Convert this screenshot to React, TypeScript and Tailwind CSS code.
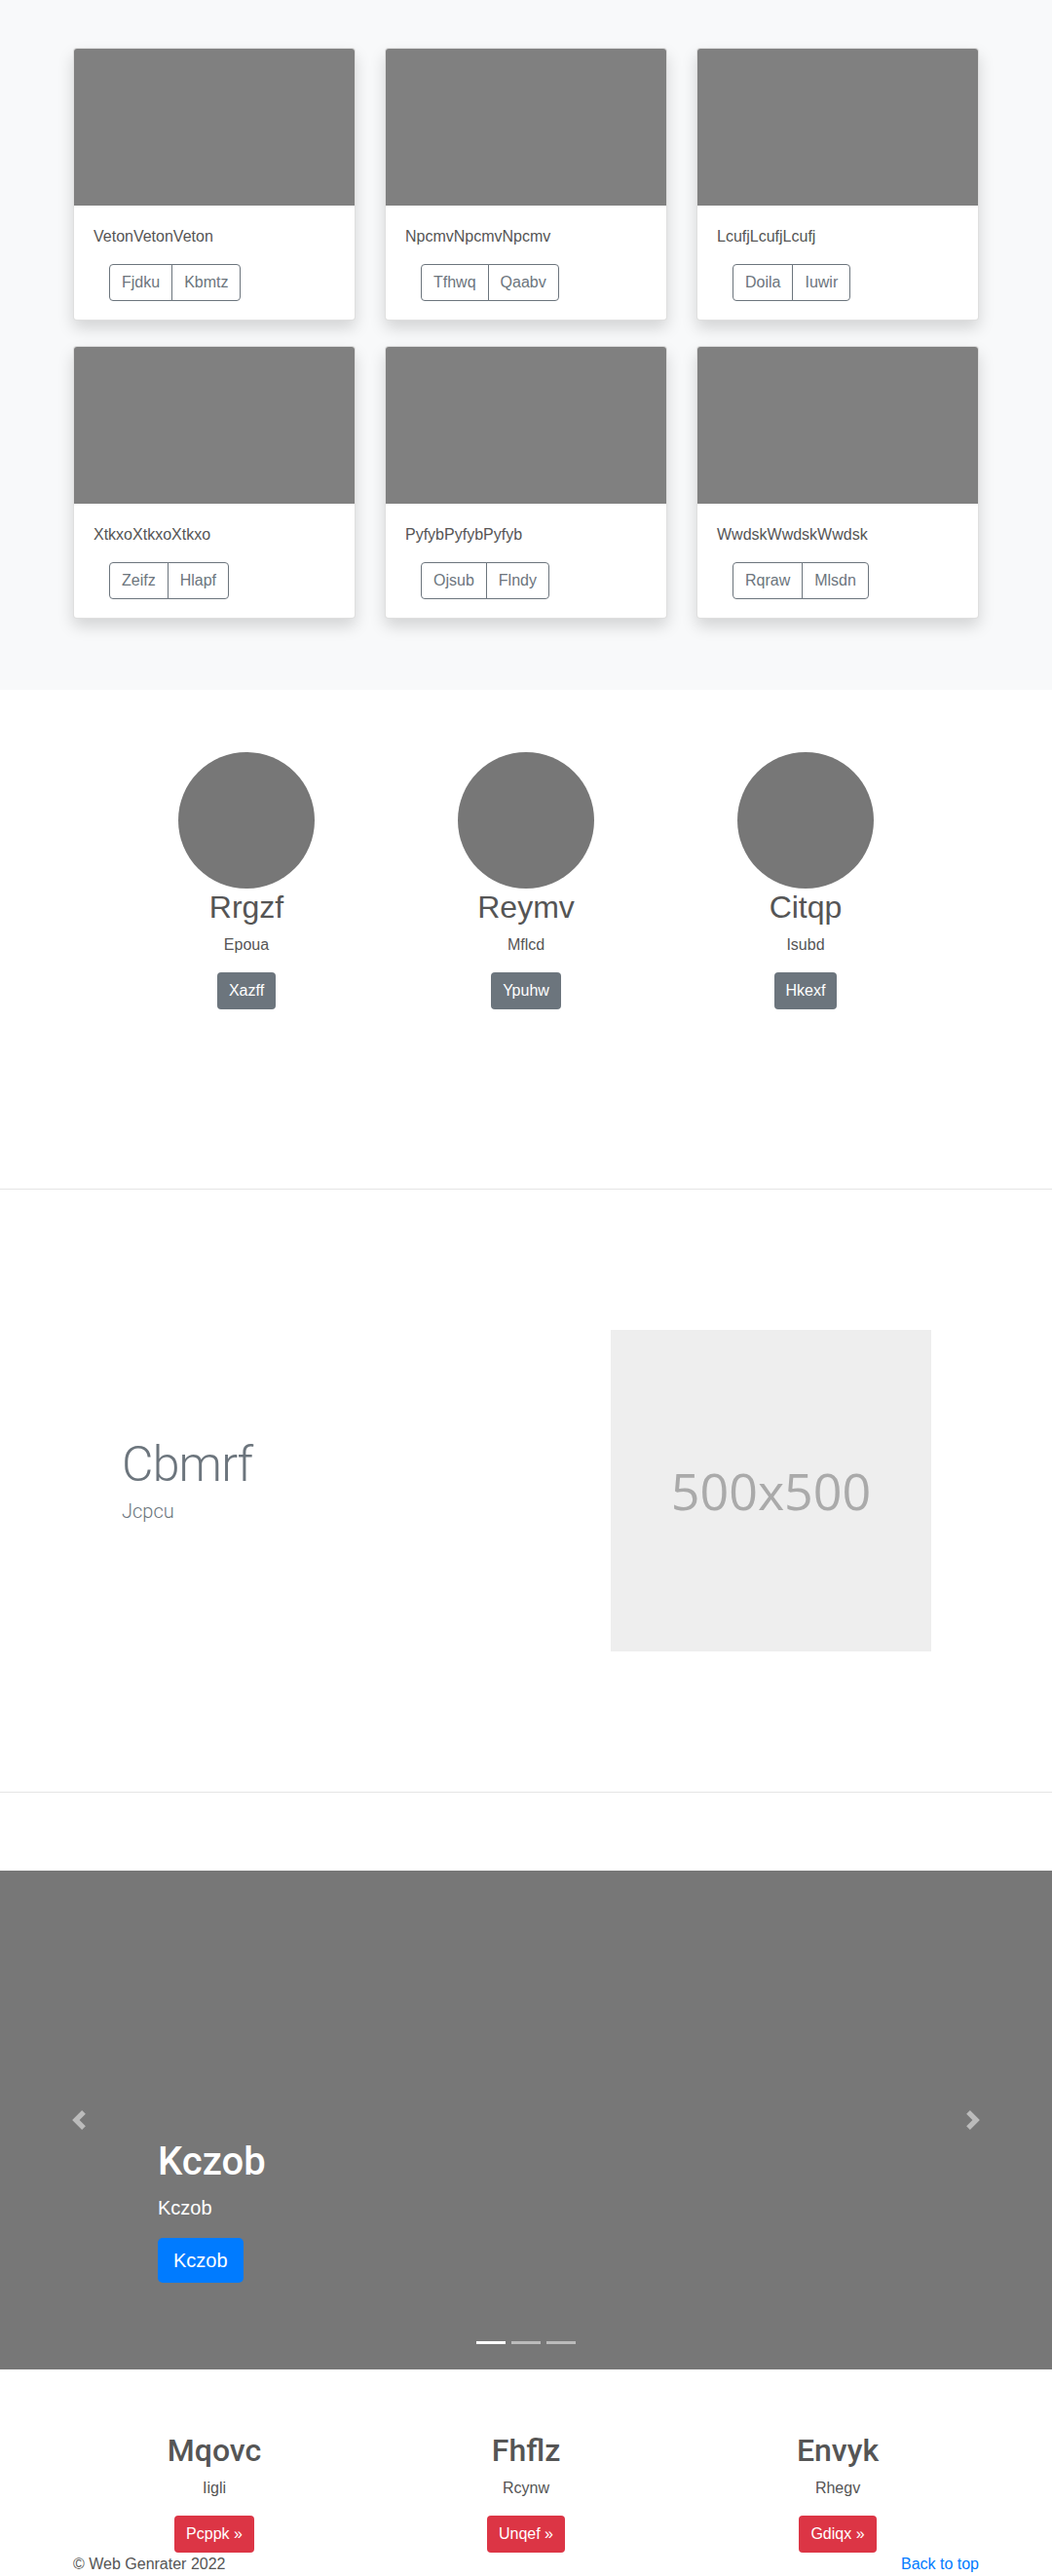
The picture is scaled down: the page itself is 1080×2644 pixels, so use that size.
const cards = [
  { title: "VetonVetonVeton", a: "Fjdku", b: "Kbmtz" },
  { title: "NpcmvNpcmvNpcmv", a: "Tfhwq", b: "Qaabv" },
  { title: "LcufjLcufjLcufj", a: "Doila", b: "Iuwir" },
  { title: "XtkxoXtkxoXtkxo", a: "Zeifz", b: "Hlapf" },
  { title: "PyfybPyfybPyfyb", a: "Ojsub", b: "Flndy" },
  { title: "WwdskWwdskWwdsk", a: "Rqraw", b: "Mlsdn" },
];

const people = [
  { name: "Rrgzf", sub: "Epoua", btn: "Xazff" },
  { name: "Reymv", sub: "Mflcd", btn: "Ypuhw" },
  { name: "Citqp", sub: "Isubd", btn: "Hkexf" },
];

const features = [
  { name: "Mqovc", sub: "Iigli", btn: "Pcppk »" },
  { name: "Fhflz", sub: "Rcynw", btn: "Unqef »" },
  { name: "Envyk", sub: "Rhegv", btn: "Gdiqx »" },
];

function Chevron({ dir }: { dir: "prev" | "next" }) {
  return (
    <svg viewBox="0 0 8 8" className="h-5 w-5" fill="#fff" aria-hidden="true">
      {dir === "prev" ? (
        <path d="M5.25 0l-4 4 4 4 1.5-1.5L4.25 4l2.5-2.5L5.25 0z" />
      ) : (
        <path d="M2.75 0l-1.5 1.5L3.75 4l-2.5 2.5L2.75 8l4-4-4-4z" />
      )}
    </svg>
  );
}

export default function App() {
  return (
    <div className="min-h-[2644px] bg-white font-['Liberation_Sans',Arial,sans-serif] text-[16px] leading-6 text-[#555]">
      {/* album */}
      <section className="bg-[#f8f9fa] pt-[49px] pb-[73px]">
        <div className="mx-auto grid w-[960px] grid-cols-3 gap-x-[30px] gap-y-[26px] px-[15px]">
          {cards.map((c) => (
            <div
              key={c.title}
              className="h-[280px] overflow-hidden rounded-[4px] border border-black/[0.125] bg-white shadow-[0_8px_16px_rgba(0,0,0,0.15)]"
            >
              <div className="h-[161px] bg-[#808080]" />
              <div className="px-5 pt-5">
                <p className="text-[16px] leading-6">{c.title}</p>
                <div className="mt-4 ml-4 inline-flex text-[16px] leading-6 text-[#6c757d]">
                  <button className="rounded-l-[4px] border border-[#6c757d] px-3 py-[6px]">{c.a}</button>
                  <button className="-ml-px rounded-r-[4px] border border-[#6c757d] px-3 py-[6px]">{c.b}</button>
                </div>
              </div>
            </div>
          ))}
        </div>
      </section>

      {/* circles */}
      <section className="h-[512px] pt-16">
        <div className="mx-auto grid w-[861px] grid-cols-3">
          {people.map((p) => (
            <div key={p.name} className="flex flex-col items-center text-center">
              <div className="h-[140px] w-[140px] rounded-full bg-[#777]" />
              <h2 className="text-[32px] leading-[38px]">{p.name}</h2>
              <p className="mt-2 text-[16px] leading-6">{p.sub}</p>
              <button className="mt-4 rounded-[4px] bg-[#6c757d] px-3 py-[7px] text-[16px] leading-6 text-white">
                {p.btn}
              </button>
            </div>
          ))}
        </div>
      </section>

      {/* featurette */}
      <hr className="border-t border-black/10" />
      <section className="flex items-center py-[144px]">
        <div className="w-[627px] pl-[125px] pb-4 font-['Roboto',sans-serif]">
          <h2 className="text-[50px] leading-[50px] font-light tracking-[-0.8px] text-[#6c757d]">Cbmrf</h2>
          <p className="mt-2 text-[20px] leading-[30px] font-light text-[#6c757d]">Jcpcu</p>
        </div>
        <div className="flex h-[330px] w-[329px] items-center justify-center bg-[#eee] font-['Open_Sans',sans-serif] text-[52px] text-[#aaa]">
          500x500
        </div>
      </section>
      <hr className="border-t border-black/10" />

      {/* carousel */}
      <section className="relative mt-20 h-[512px] bg-[#777]">
        <div className="absolute inset-y-0 left-0 flex w-[162px] items-center justify-center opacity-50">
          <Chevron dir="prev" />
        </div>
        <div className="absolute inset-y-0 right-0 flex w-[162px] items-center justify-center opacity-50">
          <Chevron dir="next" />
        </div>
        <div className="absolute bottom-[89px] left-[162px] text-white">
          <h1 className="font-['Roboto',sans-serif] text-[40px] leading-[48px] font-medium">Kczob</h1>
          <p className="mt-2 text-[20px] leading-[30px]">Kczob</p>
          <button className="mt-4 rounded-[5px] bg-[#007bff] px-4 py-2 text-[20px] leading-[30px] text-white">
            Kczob
          </button>
        </div>
        <div className="absolute bottom-[26px] left-0 right-0 flex justify-center gap-[6px]">
          <span className="h-[3px] w-[30px] bg-white" />
          <span className="h-[3px] w-[30px] bg-white/50" />
          <span className="h-[3px] w-[30px] bg-white/50" />
        </div>
      </section>

      {/* marketing */}
      <section className="pt-16">
        <div className="mx-auto grid w-[960px] grid-cols-3">
          {features.map((f) => (
            <div key={f.name} className="flex flex-col items-center px-[15px] text-center">
              <h2 className="font-['Roboto',sans-serif] text-[32px] leading-[38px] font-medium">{f.name}</h2>
              <p className="mt-2 text-[16px] leading-6">{f.sub}</p>
              <button className="mt-4 rounded-[4px] bg-[#dc3545] px-3 py-[7px] text-[16px] leading-6 text-white">
                {f.btn}
              </button>
            </div>
          ))}
        </div>
      </section>

      <footer className="mx-auto flex w-[960px] justify-between px-[15px] text-[16px] leading-6">
        <p>© Web Genrater 2022</p>
        <a href="#" className="text-[#007bff]">
          Back to top
        </a>
      </footer>
    </div>
  );
}
